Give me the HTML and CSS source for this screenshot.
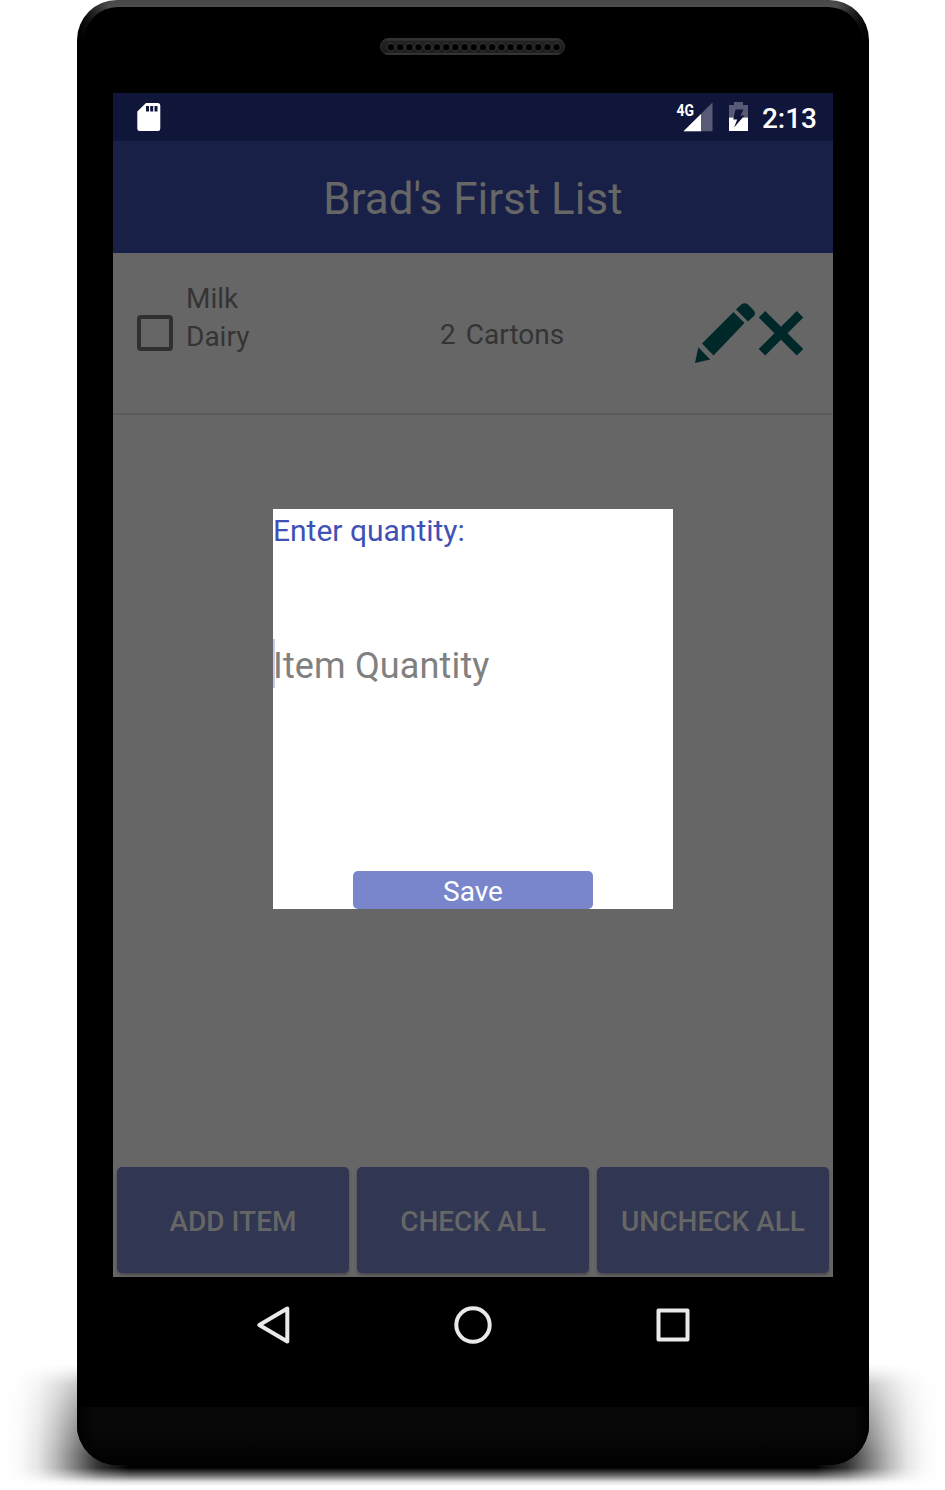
FILE: index.html
```html
<!DOCTYPE html>
<html lang="en">
<head>
<meta charset="utf-8">
<title>Brad's First List</title>
<link rel="stylesheet" href="styles.css">
</head>
<body>
<div class="stage">
  <div class="ground-shadow"></div>
  <main class="phone">
    <div class="chin"></div>
    <header class="earpiece">
      <svg class="speaker" width="186" height="18" viewBox="0 0 186 18">
        <defs>
          <linearGradient id="rim" x1="0" y1="0" x2="0" y2="1">
            <stop offset="0" stop-color="#3c3c3c"/><stop offset=".2" stop-color="#222"/>
            <stop offset=".85" stop-color="#191919"/><stop offset="1" stop-color="#484848"/>
          </linearGradient>
          <pattern id="holes" x="6.4" y="0" width="9.2" height="18" patternUnits="userSpaceOnUse">
            <circle cx="4.6" cy="9.2" r="3.8" fill="#000" stroke="#393939" stroke-width="1"/>
          </pattern>
        </defs>
        <rect x=".5" y=".5" width="184" height="16" rx="8" fill="url(#rim)" stroke="#303030"/>
        <rect x="6.4" width="174.8" height="18" fill="url(#holes)"/>
      </svg>
    </header>
    <section class="screen">
      <div class="status">
        <svg class="sd" width="24" height="28" viewBox="0 0 24 28"><path fill="#fff" fill-rule="evenodd" d="M9 0H21Q23.3 0 23.3 2.5V25.5Q23.3 28 21 28H2.500Q.3 28 .3 25.500V8.500ZM9 3V8.500H12V3ZM13.200 3V8.500H16.200V3ZM17.500 3V8.500H20.500V3Z"/></svg>
        <div class="status-right">
          <svg class="signal" width="37" height="30" viewBox="0 0 37 30">
            <path fill="#585b75" d="M35.500 .5V29.300H6.500Z"/><path fill="#fff" d="M24 12V29.300H6.500Z"/>
            <text class="network" x="-.5" y="13.500" textLength="17.500" lengthAdjust="spacingAndGlyphs">4G</text>
          </svg>
          <svg class="battery" width="19" height="30" viewBox="0 0 19 30">
            <path fill="#585b75" d="M5 0H14V3H19V15.500H0V3H5Z"/><path fill="#fff" d="M0 15.500H19V29H0Z"/>
            <path fill="#10153a" d="M6.500 7.500H14.500L11.500 13.500H15.500L5 25.500L8.200 17.500H4.300Z"/>
          </svg>
          <span class="clock">2:13</span>
        </div>
      </div>
      <h1 class="title"><span>Brad's First List</span></h1>
      <div class="row">
        <span class="checkbox"></span>
        <div class="names"><span>Milk</span><span>Dairy</span></div>
        <div class="amount"><span>2</span><span>Cartons</span></div>
        <svg class="actions" width="110" height="62" viewBox="0 0 110 62" fill="#002829">
          <path d="M3.300 45.300L15.200 57.500L0 61ZM7 41.500L38.500 10L49.500 21L18.500 53.500ZM41 7.500L46.500 2.200Q50 .2 53 2.500L59 8.500Q60.800 11 59.500 13.500L53 19.500Z"/>
          <path d="M70.200 9L86 24.800L101.800 9L108.300 15.500L92.500 31.200L108.300 47L101.800 53.500L86 37.700L70.200 53.500L63.700 47L79.500 31.200L63.700 15.500Z"/>
        </svg>
      </div>
      <div class="list">
        <div class="dialog">
          <label class="prompt">Enter quantity:</label>
          <div class="field">Item Quantity</div>
          <div class="save">Save</div>
        </div>
      </div>
      <div class="buttons">
        <div class="button"><span>ADD ITEM</span></div>
        <div class="button"><span>CHECK ALL</span></div>
        <div class="button"><span>UNCHECK ALL</span></div>
      </div>
    </section>
    <nav class="nav">
      <svg width="440" height="40" viewBox="0 0 440 40" fill="none" stroke="#e9e9e9" stroke-width="4" stroke-linejoin="round">
        <path d="M34.300 3.500V36.500L6.300 20Z"/>
        <circle cx="220" cy="20" r="16.700"/>
        <rect x="405.500" y="5.500" width="29" height="29"/>
      </svg>
    </nav>
  </main>
</div>
</body>
</html>
```

FILE: styles.css
```css
* { box-sizing: border-box; }
body { margin: 0; background: #fff; font-family: Roboto, sans-serif; }
.stage { position: relative; width: 945px; height: 1490px; padding-left: 77px; overflow: hidden; }
.ground-shadow {
  position: absolute; left: 0; top: 1360px; width: 945px; height: 126px;
  background: linear-gradient(90deg, transparent 4px, rgba(0,0,0,.02) 20px, rgba(0,0,0,.1) 38px, rgba(0,0,0,.27) 56px, rgba(0,0,0,.5) 75px, rgba(0,0,0,.8) 98px, #000 130px, #000 815px, rgba(0,0,0,.8) 847px, rgba(0,0,0,.5) 870px, rgba(0,0,0,.27) 889px, rgba(0,0,0,.1) 907px, rgba(0,0,0,.02) 925px, transparent 941px);
  -webkit-mask-image: linear-gradient(transparent 4px, rgba(0,0,0,.12) 12px, rgba(0,0,0,.4) 24px, rgba(0,0,0,.65) 50px, #000 95px, #000 108px, rgba(0,0,0,.55) 116px, rgba(0,0,0,.12) 122px, transparent 126px);
  mask-image: linear-gradient(transparent 4px, rgba(0,0,0,.12) 12px, rgba(0,0,0,.4) 24px, rgba(0,0,0,.65) 50px, #000 95px, #000 108px, rgba(0,0,0,.55) 116px, rgba(0,0,0,.12) 122px, transparent 126px);
}
.phone {
  position: relative; isolation: isolate; width: 792px; height: 1465px; border-radius: 40px;
  overflow: hidden; display: flex; flex-direction: column; align-items: center;
  background: linear-gradient(90deg, #000, transparent 32px, transparent 760px, #000), linear-gradient(#474747, #4e4e4e 7px, #000 42px);
}
.phone::before { content: ""; position: absolute; z-index: -1; inset: 7px 7px 0; border-radius: 34px 34px 0 0; background: #000; }
.chin { position: absolute; z-index: -1; left: 0; right: 0; bottom: 0; height: 58px; background: linear-gradient(90deg, #000, transparent 16px, transparent 776px, #000), linear-gradient(#080808 40%, #010101); }
.earpiece { height: 93px; padding-top: 38px; flex: none; }
.speaker { display: block; }
.screen { width: 720px; height: 1184px; display: flex; flex-direction: column; background: #666; color: #343434; flex: none; font-size: 28px; }
.status { height: 48px; background: #10153a; display: flex; justify-content: space-between; align-items: center; padding: 0 16px 0 24px; color: #fff; flex: none; }
.status-right { display: flex; align-items: center; }
.signal { overflow: visible; }
.battery { margin: 0 14px 0 15px; }
.network { font: 700 17px Roboto, sans-serif; fill: #fff; }
.clock { font-size: 28px; font-weight: 500; line-height: 48px; padding-top: 3px; }
.title { margin: 0; height: 112px; background: #192047; color: #666; display: flex; align-items: center; justify-content: center; font-size: 44px; font-weight: 400; padding-top: 4px; flex: none; }
.row { height: 162px; border-bottom: 2px solid #5b5b5b; display: grid; grid-template-columns: 49px 254px 255px 110px; padding: 24px 0 0 24px; flex: none; }
.checkbox { width: 36px; height: 36px; margin-top: 38px; border: 4px solid #303030; border-radius: 4px; }
.names { display: flex; flex-direction: column; line-height: 38px; padding-top: 3px; }
.amount { display: flex; gap: 10px; line-height: 38px; padding-top: 39px; }
.actions { margin-top: 25px; overflow: visible; }
.list { flex: 1; padding-top: 94px; display: flex; justify-content: center; align-items: flex-start; }
.dialog { width: 400px; height: 400px; background: #fff; display: flex; flex-direction: column; }
.prompt { height: 130px; color: #3f51b5; font-size: 30px; line-height: 44px; }
.field { height: 49px; border-left: 2px solid #c5cbe9; color: #808080; font-size: 36px; line-height: 54px; text-indent: -2px; letter-spacing: .15px; }
.save { width: 240px; height: 38px; margin: auto auto 0; border-radius: 5px; background: #7986cb; color: #fff; text-align: center; line-height: 41px; }
.buttons { display: flex; gap: 8px; padding: 0 4px 4px; }
.button { flex: 1; height: 106px; border-radius: 5px; background: #313652; color: #666; font-weight: 500; display: flex; align-items: center; justify-content: center; padding-top: 3px; box-shadow: 0 2px 3px rgba(0,0,0,.3); }
.nav { padding-top: 28px; }
.nav svg { display: block; }
```
